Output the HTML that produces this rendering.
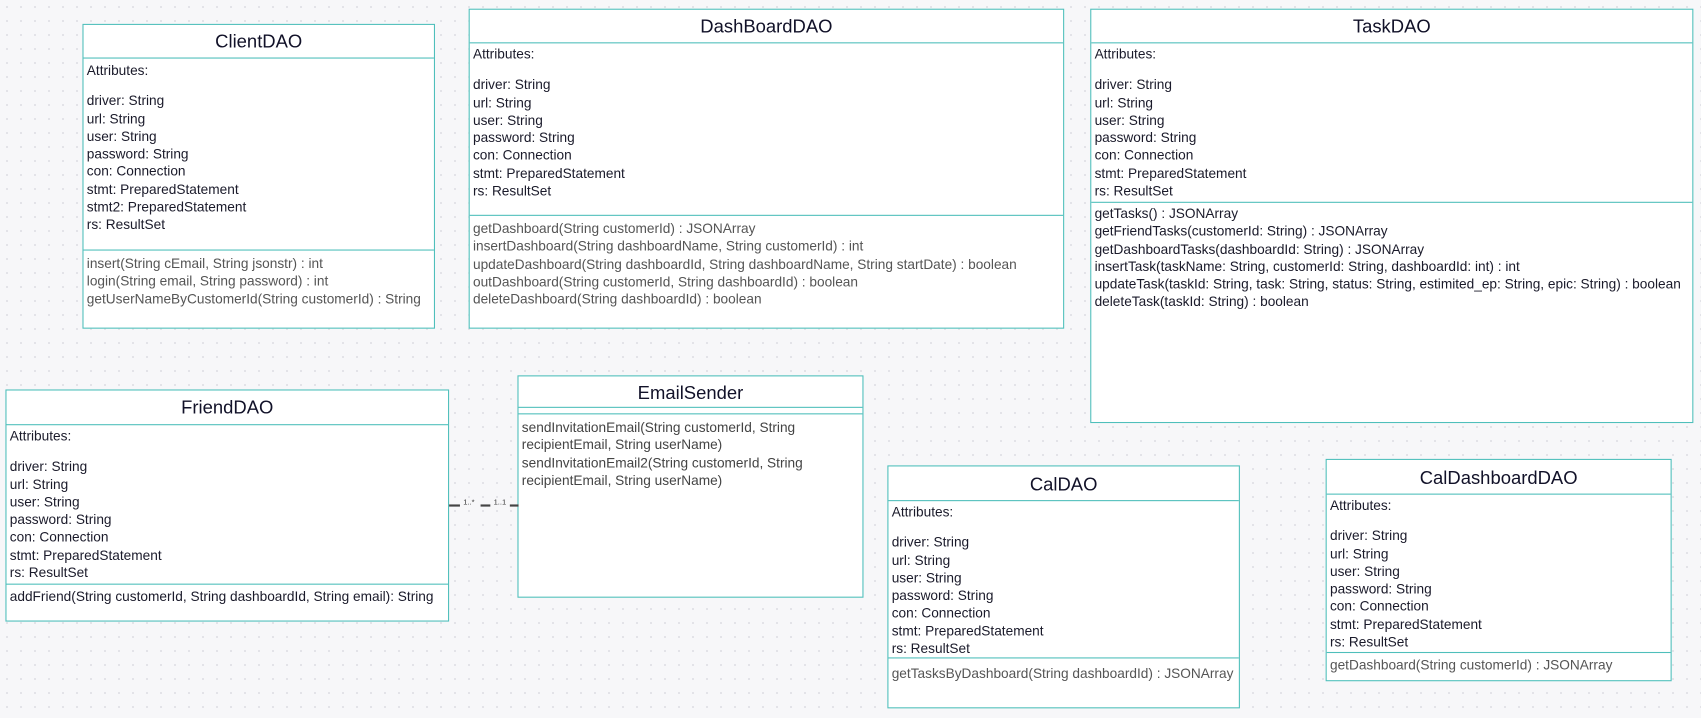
<!DOCTYPE html>
<html><head><meta charset="utf-8"><style>
body{margin:0;width:1701px;height:718px;overflow:hidden;background-color:#f7f7f9;background-image:radial-gradient(#dcdce2 0.8px,transparent 1px);background-size:14px 14px;font-family:"Liberation Sans",sans-serif;color:#1a1a2a;position:relative}
#w{position:absolute;left:0;top:0;width:1568px;height:662px;transform:scale(1.0848);transform-origin:0 0}
.b{position:absolute;background:#fff;border:1.8px solid #4fbfbb;box-sizing:border-box}
.t{position:absolute;left:0;right:0;top:0;text-align:center;font-size:17px;color:#111128;border-bottom:1.8px solid #4fbfbb}
.a,.m{position:absolute;left:0;right:0;padding:0 3px;font-size:12.6px;line-height:16.3px;white-space:nowrap}
.a i{display:block;height:12px}
.m{border-top:1.8px solid #4fbfbb;padding-top:4px;color:#555}
.m.d{color:#1a1a2a}
</style></head><body><div id="w">

<div class="b" style="left:76px;top:22px;width:325px;height:281px">
<div class="t" style="height:30px;line-height:31px">ClientDAO</div>
<div class="a" style="top:34px">Attributes:<i></i>driver: String<br>url: String<br>user: String<br>password: String<br>con: Connection<br>stmt: PreparedStatement<br>stmt2: PreparedStatement<br>rs: ResultSet</div>
<div class="m" style="top:207px">insert(String cEmail, String jsonstr) : int<br>login(String email, String password) : int<br>getUserNameByCustomerId(String customerId) : String</div>
</div>

<div class="b" style="left:432px;top:8px;width:549px;height:295px">
<div class="t" style="height:30px;line-height:31px">DashBoardDAO</div>
<div class="a" style="top:33px">Attributes:<i></i>driver: String<br>url: String<br>user: String<br>password: String<br>con: Connection<br>stmt: PreparedStatement<br>rs: ResultSet</div>
<div class="m" style="top:189px">getDashboard(String customerId) : JSONArray<br>insertDashboard(String dashboardName, String customerId) : int<br>updateDashboard(String dashboardId, String dashboardName, String startDate) : boolean<br>outDashboard(String customerId, String dashboardId) : boolean<br>deleteDashboard(String dashboardId) : boolean</div>
</div>

<div class="b" style="left:1005px;top:8px;width:556px;height:382px">
<div class="t" style="height:30px;line-height:31px">TaskDAO</div>
<div class="a" style="top:33px">Attributes:<i></i>driver: String<br>url: String<br>user: String<br>password: String<br>con: Connection<br>stmt: PreparedStatement<br>rs: ResultSet</div>
<div class="m d" style="top:177px;padding-top:2px">getTasks() : JSONArray<br>getFriendTasks(customerId: String) : JSONArray<br>getDashboardTasks(dashboardId: String) : JSONArray<br>insertTask(taskName: String, customerId: String, dashboardId: int) : int<br>updateTask(taskId: String, task: String, status: String, estimited_ep: String, epic: String) : boolean<br>deleteTask(taskId: String) : boolean</div>
</div>

<div class="b" style="left:5px;top:359px;width:409px;height:214px">
<div class="t" style="height:31px;line-height:32px">FriendDAO</div>
<div class="a" style="top:34px">Attributes:<i></i>driver: String<br>url: String<br>user: String<br>password: String<br>con: Connection<br>stmt: PreparedStatement<br>rs: ResultSet</div>
<div class="m d" style="top:178px;padding-top:3px">addFriend(String customerId, String dashboardId, String email): String</div>
</div>

<div class="b" style="left:477px;top:346px;width:319px;height:205px">
<div class="t" style="height:29px;line-height:31px;border-bottom:none">EmailSender</div>
<div style="position:absolute;left:0;right:0;top:28px;height:5px;border-top:1.8px solid #4fbfbb;border-bottom:1.8px solid #4fbfbb"></div>
<div class="a" style="top:39px;color:#444">sendInvitationEmail(String customerId, String<br>recipientEmail, String userName)<br>sendInvitationEmail2(String customerId, String<br>recipientEmail, String userName)</div>
</div>

<div style="position:absolute;left:414px;top:465px;width:63px;height:2px">
<div style="position:absolute;left:0;top:0;width:10px;height:2px;background:#444"></div>
<div style="position:absolute;left:13px;top:-5px;font-size:7px;color:#333">1..*</div>
<div style="position:absolute;left:29px;top:0;width:9px;height:2px;background:#444"></div>
<div style="position:absolute;left:41px;top:-5px;font-size:7px;color:#333">1..1</div>
<div style="position:absolute;left:56px;top:0;width:8px;height:2px;background:#444"></div>
</div>

<div class="b" style="left:818px;top:429px;width:325px;height:224px">
<div class="t" style="height:31px;line-height:33px">CalDAO</div>
<div class="a" style="top:34px">Attributes:<i></i>driver: String<br>url: String<br>user: String<br>password: String<br>con: Connection<br>stmt: PreparedStatement<br>rs: ResultSet</div>
<div class="m" style="top:176px;padding-top:6px">getTasksByDashboard(String dashboardId) : JSONArray</div>
</div>

<div class="b" style="left:1222px;top:423px;width:319px;height:205px">
<div class="t" style="height:31px;line-height:33px">CalDashboardDAO</div>
<div class="a" style="top:34px">Attributes:<i></i>driver: String<br>url: String<br>user: String<br>password: String<br>con: Connection<br>stmt: PreparedStatement<br>rs: ResultSet</div>
<div class="m" style="top:177px;padding-top:3px">getDashboard(String customerId) : JSONArray</div>
</div>

</div></body></html>
